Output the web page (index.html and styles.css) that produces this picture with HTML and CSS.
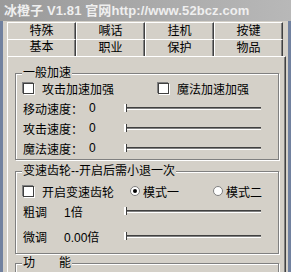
FILE: index.html
```html
<!DOCTYPE html>
<html lang="zh">
<head>
  <meta charset="UTF-8">
  <title>冰橙子 V1.81</title>
  <link rel="stylesheet" href="styles.css">
</head>
<body>
  <div class="title-bar">冰橙子 V1.81 官网http://www.52bcz.com</div>

  <div class="frame">
    <div class="tabs">
      <div class="tab-row back">
        <div class="tab">特殊</div>
        <div class="tab">喊话</div>
        <div class="tab">挂机</div>
        <div class="tab">按键</div>
      </div>
      <div class="tab-row front">
        <div class="tab active">基本</div>
        <div class="tab">职业</div>
        <div class="tab">保护</div>
        <div class="tab">物品</div>
      </div>
    </div>

    <div class="panel">
      <fieldset class="group">
        <legend>一般加速</legend>
        <div class="check-row">
          <label class="check"><span class="box"></span>攻击加速加强</label>
          <label class="check"><span class="box"></span>魔法加速加强</label>
        </div>
        <div class="slider-row">
          <span class="name">移动速度：</span><span class="value">0</span>
          <div class="slider"><span class="thumb"></span></div>
        </div>
        <div class="slider-row">
          <span class="name">攻击速度：</span><span class="value">0</span>
          <div class="slider"><span class="thumb"></span></div>
        </div>
        <div class="slider-row">
          <span class="name">魔法速度：</span><span class="value">0</span>
          <div class="slider"><span class="thumb"></span></div>
        </div>
      </fieldset>

      <fieldset class="group gear">
        <legend>变速齿轮--开启后需小退一次</legend>
        <div class="mode-row">
          <label class="check"><span class="box"></span>开启变速齿轮</label>
          <label class="radio"><span class="dot on"></span>模式一</label>
          <label class="radio"><span class="dot"></span>模式二</label>
        </div>
        <div class="slider-row short">
          <span class="name">粗调</span><span class="value">1倍</span>
          <div class="slider"><span class="thumb"></span></div>
        </div>
        <div class="slider-row short tall">
          <span class="name">微调</span><span class="value">0.00倍</span>
          <div class="slider"><span class="thumb"></span></div>
        </div>
      </fieldset>

      <fieldset class="group last">
        <legend><span class="wide">功</span>能</legend>
      </fieldset>
    </div>
  </div>
</body>
</html>
```

FILE: styles.css
```css
body {
  margin: 0;
  width: 291px;
  height: 272px;
  overflow: hidden;
  background-color: #d4d0c8;
  font-family: "Liberation Sans", "Noto Sans CJK SC", sans-serif;
  font-size: 12px;
  color: #000;
}

.title-bar {
  height: 21px;
  line-height: 21px;
  padding-left: 4px;
  background: linear-gradient(to right, #9a9a9a, #b8b8b8);
  color: #efefef;
  font-size: 13px;
  font-weight: bold;
  letter-spacing: 0.1px;
  white-space: nowrap;
}

.frame {
  height: 251px;
  overflow: hidden;
  border-left: 3px solid #71819f;
  border-right: 3px solid #71819f;
  padding-left: 4px;
  padding-right: 2px;
}

/* Tabs */
.tab-row {
  display: grid;
  grid-template-columns: repeat(4, 69px);
  height: 17px;
}

.back {
  margin-top: 1px;
}

.tab {
  text-align: center;
  line-height: 16px;
  border-top: 1px solid #fff;
  border-left: 1px solid #fff;
  border-right: 1px solid #404040;
  box-shadow: inset -1px 0 0 #808080;
}

.tab.active {
  line-height: 14px;
}

/* Panel */
.panel {
  border-top: 1px solid #fff;
  border-left: 1px solid #fff;
  border-right: 1px solid #404040;
  box-shadow: inset -1px 0 0 #808080;
  height: 230px;
  padding: 9px 6px 0 7px;
}

.group {
  margin: 0;
  padding: 0 0 1px 7px;
  border: 1px solid #808080;
  box-shadow: 1px 1px 0 #fff, inset 1px 1px 0 #fff;
  min-width: 0;
}

.group legend {
  padding: 0 1px;
  margin-left: -1px;
  background-color: #d4d0c8;
  line-height: 14px;
}

.wide {
  margin-right: 24px;
}

.gear {
  margin-top: 4px;
  padding-bottom: 4px;
}

.last {
  margin-top: 2px;
  height: 20px;
}

.check-row,
.mode-row {
  display: flex;
  align-items: center;
  height: 16px;
  margin-bottom: 2px;
}

.mode-row {
  margin-top: 5px;
}

.check, .radio {
  display: flex;
  align-items: center;
  flex: none;
  white-space: nowrap;
}

.check-row .check:first-child {
  width: 135px;
}

.mode-row .check {
  width: 107px;
}

.mode-row .radio {
  width: 83px;
}

.box {
  width: 9px;
  height: 9px;
  flex: none;
  margin-right: 8px;
  background-color: #fff;
  border: 1px solid #404040;
  box-shadow: 1px 1px 0 #fff, -1px -1px 0 #808080;
}

.dot {
  width: 10px;
  height: 10px;
  flex: none;
  margin-right: 3px;
  border-radius: 50%;
  background-color: #fff;
  border: 1px solid #808080;
  box-sizing: border-box;
  display: flex;
  align-items: center;
  justify-content: center;
}

.dot.on::after {
  content: "";
  width: 4px;
  height: 4px;
  border-radius: 50%;
  background-color: #000;
}

.slider-row {
  display: flex;
  align-items: center;
  height: 20px;
}

.slider-row .name {
  width: 66px;
}

.slider-row .value {
  width: 35px;
}

.short .name {
  width: 41px;
}

.short .value {
  width: 60px;
}

.tall {
  height: 25px;
  margin-top: 3px;
}

.slider {
  position: relative;
  width: 137px;
  height: 1px;
  border-top: 1px solid #404040;
  border-bottom: 1px solid #fff;
  background-color: #808080;
}

.thumb {
  position: absolute;
  left: 0;
  top: -4px;
  width: 2px;
  height: 8px;
  background-color: #fff;
  border-right: 1px solid #404040;
}
```
